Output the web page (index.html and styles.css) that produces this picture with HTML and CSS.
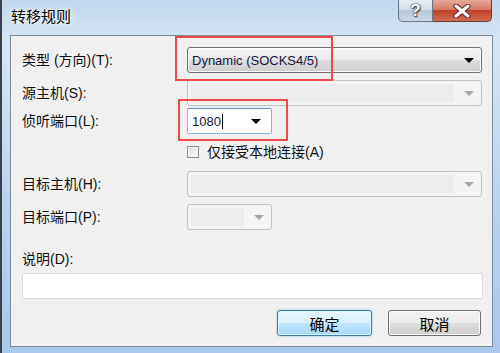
FILE: index.html
```html
<!DOCTYPE html>
<html>
<head>
  <title>转移规则</title>
  <link rel="stylesheet" href="styles.css">
</head>
<body>
  <div class="window">
    <!-- 标题栏 -->
    <div class="titlebar">
      <span class="title">转移规则</span>
      <div class="caption-buttons">
        <span class="btn-help">?</span>
        <span class="btn-close">
          <svg width="20" height="14" viewBox="0 0 20 14">
            <path d="M4 2 L16 12 M16 2 L4 12" stroke="#5a2a20" stroke-width="5" stroke-linecap="round"/>
            <path d="M4 2 L16 12 M16 2 L4 12" stroke="#ffffff" stroke-width="3" stroke-linecap="round"/>
          </svg>
        </span>
      </div>
    </div>

    <div class="client">
      <div class="row row-type">
        <label class="label">类型 (方向)(T):</label>
        <div class="combo combo-button wide">
          <span class="combo-text">Dynamic (SOCKS4/5)</span>
          <span class="arrow"></span>
        </div>
      </div>
      <div class="row row-source">
        <label class="label">源主机(S):</label>
        <div class="combo disabled wide">
          <span class="combo-field"></span>
          <span class="arrow"></span>
        </div>
      </div>
      <div class="row row-port">
        <label class="label">侦听端口(L):</label>
        <div class="combo edit narrow">
          <span class="combo-text">1080<span class="caret"></span></span>
          <span class="arrow"></span>
        </div>
      </div>
      <div class="row row-check">
        <span class="label"></span>
        <label class="check"><span class="box"></span>仅接受本地连接(A)</label>
      </div>
      <div class="row row-dest">
        <label class="label">目标主机(H):</label>
        <div class="combo disabled wide">
          <span class="combo-field"></span>
          <span class="arrow"></span>
        </div>
      </div>
      <div class="row row-destport">
        <label class="label">目标端口(P):</label>
        <div class="combo disabled narrow">
          <span class="combo-field"></span>
          <span class="arrow"></span>
        </div>
      </div>
      <div class="desc-label">说明(D):</div>
      <div class="desc-input"></div>
      <div class="buttons">
        <button class="push default">确定</button>
        <button class="push">取消</button>
      </div>
    </div>

    <!-- 红色标注框 -->
    <div class="mark mark-type"></div>
    <div class="mark mark-port"></div>
  </div>
</body>
</html>
```

FILE: styles.css
```css
body {
  margin: 0;
  font-family: "Liberation Sans", "Noto Sans CJK SC", sans-serif;
}
.window {
  position: relative;
  width: 500px;
  height: 353px;
  box-sizing: border-box;
  border-left: 2px solid #3c4048;
  background: linear-gradient(to bottom, #c2d8ee 0%, #d6e5f3 12%, #b9d3ee 60%, #a9c8ea 100%);
  overflow: hidden;
}
.titlebar {
  height: 35px;
  display: flex;
  justify-content: space-between;
  align-items: flex-start;
}
.title {
  font-family: "Noto Sans CJK SC", sans-serif;
  font-size: 15px;
  line-height: 17px;
  margin: 7px 0 0 9px;
  color: #000;
  text-shadow: 0 0 6px #ffffff, 0 0 3px #ffffff;
}
.caption-buttons {
  display: flex;
  margin-right: 8px;
}
.btn-help {
  width: 35px;
  height: 22px;
  box-sizing: border-box;
  border: 1px solid #6b7786;
  border-top: none;
  border-radius: 0 0 0 5px;
  background: linear-gradient(to bottom, #e6edf4 0%, #d3dee9 45%, #b9c8d7 50%, #c9d6e3 100%);
  color: #fff;
  font-weight: bold;
  font-size: 17px;
  text-align: center;
  line-height: 21px;
  text-shadow: 0 0 2px #333, 0 0 1px #333, 1px 1px 1px #444;
}
.btn-close {
  width: 59px;
  height: 22px;
  box-sizing: border-box;
  border: 1px solid #6b3a34;
  border-left: none;
  border-top: none;
  border-radius: 0 0 5px 0;
  background: linear-gradient(to bottom, #e7a899 0%, #d77b66 45%, #c3432a 50%, #d26a50 100%);
  display: flex;
  justify-content: center;
  align-items: center;
}
.client {
  margin-left: 8px;
  width: 483px;
  height: 312px;
  box-sizing: border-box;
  border: 1px solid #7f8c9b;
  background: #f0f0f0;
  font-family: "Liberation Sans", "Noto Sans CJK SC", sans-serif;
  font-size: 14px;
  color: #101010;
}
.row {
  display: flex;
  align-items: center;
  height: 26px;
}
.row-type { margin-top: 11px; }
.row-source { margin-top: 7px; }
.row-port { margin-top: 2px; }
.row-check { margin-top: 11px; height: 13px; }
.row-dest { margin-top: 13px; }
.row-destport { margin-top: 7px; }
.label {
  width: 165px;
  padding-left: 11px;
  flex-shrink: 0;
  line-height: 16px;
}
.combo {
  height: 26px;
  box-sizing: border-box;
  display: flex;
  align-items: center;
  justify-content: space-between;
  border-radius: 3px;
}
.wide { width: 295px; }
.narrow { width: 85px; }
.combo-button {
  border: 1px solid #707070;
  background: linear-gradient(to bottom, #f2f2f2 0%, #ebebeb 48%, #dddddd 52%, #cfcfcf 100%);
  box-shadow: inset 0 0 0 1px #fafafa;
}
.combo-text {
  font-family: "Liberation Sans", sans-serif;
  font-size: 13px;
  padding-left: 4px;
  color: #14143e;
  display: flex;
  align-items: center;
}
.caret {
  display: inline-block;
  width: 1px;
  height: 15px;
  background: #000;
  margin-left: 1px;
}
.arrow {
  width: 0;
  height: 0;
  border-left: 5px solid transparent;
  border-right: 5px solid transparent;
  border-top: 5px solid #000;
  margin-right: 7px;
}
.edit {
  border: 1px solid #86b6e4;
  border-top-color: #5d94c8;
  border-radius: 2px;
  background: #fff;
}
.edit .arrow { margin-right: 10px; }
.disabled {
  border: 1px solid #c2c2c2;
  background: #f4f4f4;
  padding-left: 3px;
}
.combo-field {
  flex: 1;
  height: 18px;
  background: #ececec;
  margin-right: 10px;
}
.disabled .arrow {
  border-top-color: #a6a6a6;
}
.check {
  display: flex;
  align-items: center;
  gap: 8px;
  line-height: 16px;
}
.box {
  width: 12px;
  height: 12px;
  box-sizing: border-box;
  border: 1px solid #8e8f8f;
  background: linear-gradient(135deg, #dcdcdc, #fbfbfb);
  box-shadow: inset 0 0 0 1px #f4f4f4;
}
.desc-label {
  margin-top: 21px;
  padding-left: 11px;
  line-height: 16px;
}
.desc-input {
  margin: 6px 0 0 11px;
  width: 461px;
  height: 26px;
  box-sizing: border-box;
  border: 1px solid #dadada;
  border-radius: 2px;
  background: #fff;
}
.buttons {
  display: flex;
  justify-content: flex-end;
  gap: 16px;
  margin-top: 11px;
  padding-right: 11px;
}
.push {
  width: 93px;
  height: 26px;
  box-sizing: border-box;
  border: 1px solid #707070;
  border-radius: 3px;
  background: linear-gradient(to bottom, #f2f2f2 0%, #ebebeb 48%, #dddddd 52%, #cfcfcf 100%);
  box-shadow: inset 0 0 0 1px #fbfbfb;
  font-family: "Noto Sans CJK SC", sans-serif;
  font-size: 15px;
  color: #000;
  padding: 0;
}
.push.default {
  width: 95px;
  border-color: #3c7fb1;
  background: linear-gradient(to bottom, #eaf6fd 0%, #d9f0fc 48%, #bee6fd 52%, #a7d9f5 100%);
  box-shadow: inset 0 0 0 1px #e2f4fd, 0 0 2px #6ac3f0;
}
.mark {
  position: absolute;
  border: 2px solid #ec4b4b;
  box-sizing: border-box;
}
.mark-type {
  left: 173px;
  top: 36px;
  width: 158px;
  height: 45px;
}
.mark-port {
  left: 176px;
  top: 99px;
  width: 110px;
  height: 42px;
}
```
